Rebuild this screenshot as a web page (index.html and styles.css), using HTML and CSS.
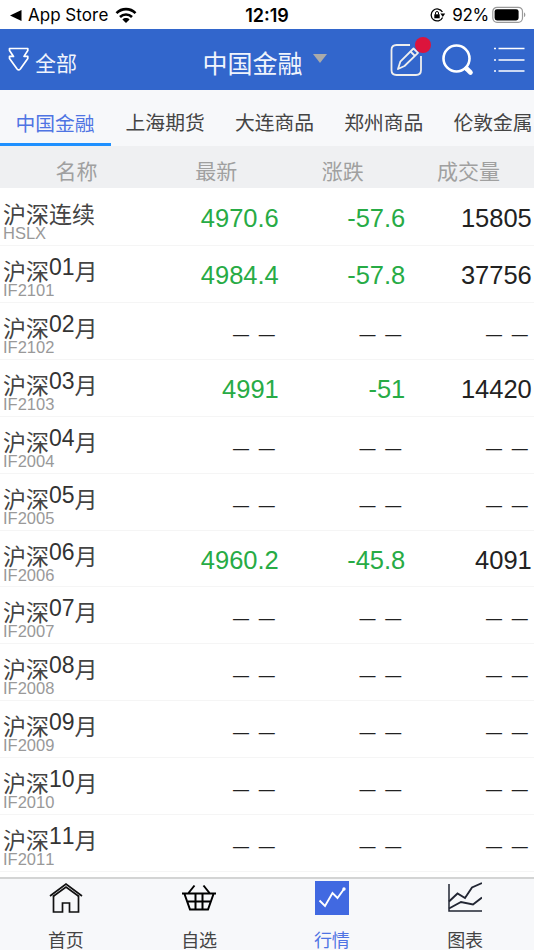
FILE: index.html
```
<!DOCTYPE html>
<html lang="zh-CN">
<head>
    <meta charset="UTF-8">
    <meta name="viewport" content="width=device-width, initial-scale=1.0">
    <title>行情</title>
    <link rel="stylesheet" href="styles.css">
</head>
<body>
    <div class="status-bar">
        <div class="status-left">
            <svg class="back" width="12" height="11" viewBox="0 0 12 11"><path d="M11.5 0v11L0 5.5z"/></svg>
            <span>App Store</span>
            <svg class="wifi" width="22" height="17" viewBox="0 0 22 17">
                <g fill="none" stroke="#000" stroke-width="2.6">
                    <path d="M1.5 6.2C6.8.8 15.2.8 20.5 6.2"/>
                    <path d="M5 10c3.4-3.4 8.6-3.4 12 0"/>
                </g>
                <path d="M7.4 12.4c2-1.9 5.2-1.9 7.2 0L11 16z"/>
            </svg>
        </div>
        <div class="status-time">12:19</div>
        <div class="status-right">
            <svg class="lock" width="16" height="14" viewBox="0 0 16 14">
                <path d="M12.4 4A6 6 0 1 0 12.6 9.5" fill="none" stroke="#000" stroke-width="1.3"/>
                <path d="M10.4 5.5h4.8L12.8 8.9z"/>
                <path d="M4.3 6.3h5.4v4H4.3z"/>
                <path d="M5.5 6.6V5a1.5 1.5 0 0 1 3 0v1.6" fill="none" stroke="#000"/>
            </svg>
            <span>92%</span>
            <svg class="battery" width="34" height="18" viewBox="0 0 34 18">
                <rect x=".8" y="1.3" width="29.7" height="15" rx="4.2" fill="none" stroke="#999" stroke-width="1.2"/>
                <rect x="2.6" y="3.2" width="24" height="11.2" rx="2.4"/>
                <path d="M32 6.5c1.8.6 1.8 4 0 4.6z" fill="#999"/>
            </svg>
        </div>
    </div>

    <div class="header">
        <div class="all">
            <svg width="22" height="25" viewBox="0 0 22 25">
                <path d="M1.5 1.5h18.3v2L16 9.4h3.8v2.2L12.3 22q-1.6 1.8-3.2 0L1.5 11.6V9.4h4L1.5 3.5z" fill="none" stroke="#fff" stroke-width="1.7" stroke-linejoin="round"/>
            </svg>
            <span>全部</span>
        </div>
        <div class="title">中国金融<i class="caret"></i></div>
        <div class="actions">
            <div class="edit">
                <svg width="34" height="34" viewBox="0 0 34 34" fill="none" stroke="#eee" stroke-width="1.8">
                    <path d="M20 2H6.5Q1.5 2 1.5 7V27Q1.5 32 6.5 32H26Q31 32 31 27V13"/>
                    <path d="M8 26l2.3-7.3L23.5 5.5l4.5 4.3L14.5 23z" stroke-linejoin="round"/>
                    <path d="M20.5 8.5l4.5 4.500"/>
                </svg>
                <span class="badge"></span>
            </div>
            <svg class="search" width="32" height="32" viewBox="0 0 32 32" fill="none" stroke="#fff">
                <circle cx="14.5" cy="14.5" r="13" stroke-width="2.6"/>
                <path d="M24.5 24.5l4 4" stroke-width="4.6" stroke-linecap="round"/>
            </svg>
            <svg class="menu" width="31" height="28" viewBox="0 0 31 28" stroke="#fff" stroke-width="1.7">
                <path d="M0 2.500h2M4.500 2.500H30.500M0 14h2M4.500 14H30.500M0 25h2M4.500 25H30.500"/>
            </svg>
        </div>
    </div>

    <div class="tabs">
        <div class="tab active">中国金融</div>
        <div class="tab">上海期货</div>
        <div class="tab">大连商品</div>
        <div class="tab">郑州商品</div>
        <div class="tab">伦敦金属</div>
    </div>

    <div class="columns">
        <span>名称</span>
        <span>最新</span>
        <span>涨跌</span>
        <span>成交量</span>
    </div>

    <div class="quotes" id="quotes">
        <!-- Rows are added by the script -->
    </div>

    <div class="nav">
        <div class="nav-item">
            <svg width="34" height="34" viewBox="0 0 34 34" fill="none" stroke="#111" stroke-width="1.7">
                <path d="M1 15L17 3l16 12"/>
                <path d="M4 15.5L17 6l13 9.5"/>
                <path d="M4.5 14.5V31H13.5V22H20.5V31H29.5V14.5"/>
            </svg>
            <span>首页</span>
        </div>
        <div class="nav-item">
            <svg width="34" height="34" viewBox="0 0 34 34" fill="none" stroke="#000" stroke-width="2">
                <path d="M0 12.5H34M2.5 13L8 28.5H26L31.5 13M6 20.5H28M13.5 13V28M20.5 13V28M6.5 12L12.5 4.5M27.5 12L21.5 4.5"/>
            </svg>
            <span>自选</span>
        </div>
        <div class="nav-item active">
            <svg width="34" height="34" viewBox="0 0 34 34">
                <rect width="34" height="34" fill="#4169e1"/>
                <path d="M4.5 19.5L10 25 17.5 12 22.5 17 29 8" fill="none" stroke="#fff" stroke-width="1.9"/>
                <circle cx="29" cy="8" r="1.7" fill="#fff"/>
            </svg>
            <span>行情</span>
        </div>
        <div class="nav-item">
            <svg width="34" height="34" viewBox="0 0 34 34" fill="none" stroke="#222633" stroke-width="1.9">
                <path d="M1 3V30H34" stroke-width="1.5"/>
                <path d="M1 20.5L9.5 12.5 17 17 24 6.5 34 2"/>
                <path d="M1 27.5L13 21 25 23.5 34 16.5"/>
            </svg>
            <span>图表</span>
        </div>
    </div>

    <script>
        const quotes = [
            { month: '', code: 'HSLX', last: '4970.6', change: '-57.6', volume: '15805' },
            { month: '01', code: 'IF2101', last: '4984.4', change: '-57.8', volume: '37756' },
            { month: '02', code: 'IF2102' },
            { month: '03', code: 'IF2103', last: '4991', change: '-51', volume: '14420' },
            { month: '04', code: 'IF2004' },
            { month: '05', code: 'IF2005' },
            { month: '06', code: 'IF2006', last: '4960.2', change: '-45.8', volume: '4091' },
            { month: '07', code: 'IF2007' },
            { month: '08', code: 'IF2008' },
            { month: '09', code: 'IF2009' },
            { month: '10', code: 'IF2010' },
            { month: '11', code: 'IF2011' }
        ];

        // Contracts without a trade show dashes
        function cell(value, color) {
            return value
                ? `<div class="value ${color}">${value}</div>`
                : '<div class="value empty">— —</div>';
        }

        document.getElementById('quotes').innerHTML = quotes.map(q => `
            <div class="row">
                <div class="name">
                    <h3>${q.month ? `沪深<b>${q.month}</b>月` : '沪深连续'}</h3>
                    <p>${q.code}</p>
                </div>
                ${cell(q.last, 'down')}
                ${cell(q.change, 'down')}
                ${cell(q.volume, '')}
            </div>
        `).join('');
    </script>
</body>
</html>
```
FILE: styles.css
```
* {
    box-sizing: border-box;
}

body {
    font-family: 'Liberation Sans', 'Noto Sans CJK SC', sans-serif;
    font-kerning: none;
    margin: 0;
    height: 950px;
    overflow: hidden;
    background: #fff;
    color: #444;
    display: flex;
    flex-direction: column;
}

svg {
    display: block;
    flex: none;
}

.status-bar {
    height: 29px;
    flex: none;
    display: grid;
    grid-template-columns: 1fr auto 1fr;
    align-items: center;
    padding: 1px 9px 0 10px;
    font-family: Inter, sans-serif;
    font-size: 17px;
    color: #000;
}

.status-left,
.status-right {
    display: flex;
    align-items: center;
}

.status-left span {
    margin: 0 7px 0 6px;
}

.status-right {
    justify-content: flex-end;
}

.status-right span {
    margin: 0 3px 0 6px;
    letter-spacing: -0.3px;
}

.battery {
    margin-right: -1px;
}

.status-time {
    margin-left: -1px;
    font-size: 18px;
    font-weight: 600;
}

.header {
    height: 61px;
    flex: none;
    display: grid;
    grid-template-columns: 1fr auto 1fr;
    align-items: center;
    padding: 0 9px 0 8px;
    background: #3266cc;
    color: #f0f4fc;
    font-family: 'Noto Sans CJK SC', sans-serif;
}

.all {
    display: flex;
    gap: 5px;
    font-size: 21px;
    line-height: 30px;
}

.all svg {
    margin-top: 4px;
}

.all span {
    padding-top: 4px;
}

.title {
    display: flex;
    align-items: center;
    margin-left: -4px;
    font-size: 25px;
    padding-top: 5px;
}

.caret {
    border: 7.5px solid transparent;
    border-top: 9px solid #aaa;
    border-bottom: 0;
    margin: -8px 0 0 10px;
}

.actions {
    display: flex;
    justify-content: flex-end;
    align-items: center;
}

.edit {
    position: relative;
    margin-right: 18px;
}

.badge {
    position: absolute;
    top: -6px;
    right: -7px;
    width: 16px;
    height: 16px;
    border-radius: 50%;
    background: #dc143c;
}

.search {
    margin-right: 20px;
}

.tabs {
    height: 56px;
    flex: none;
    display: flex;
    background: #f7f8fa;
    font-family: 'Noto Sans CJK SC', sans-serif;
    font-size: 19.8px;
}

.tab {
    flex: none;
    width: 109.3px;
    padding: 4px 1px 0 0;
    line-height: 56px;
    text-align: center;
    white-space: nowrap;
}

.tab.active {
    width: 111px;
    line-height: 57px;
    color: #4f74e3;
    border-bottom: 3px solid #1e90ff;
}

.columns {
    height: 41.5px;
    flex: none;
    display: grid;
    grid-template-columns: 153px 126.5px 126.5px 1fr;
    background: #eff0f2;
    color: #a0a0a0;
    font-family: 'Noto Sans CJK SC', sans-serif;
    font-size: 21px;
    line-height: 49px;
    text-align: center;
}

.columns span:last-child {
    padding-right: 3px;
}

.quotes {
    flex: 1;
    min-height: 0;
    padding-top: 1.4px;
}

.row {
    height: 56.95px;
    display: grid;
    grid-template-columns: 152.3px 126.5px 126.5px 126.5px;
    border-bottom: 1px solid #f5f5f5;
}

.name {
    padding: 8px 0 0 3px;
}

.name h3 {
    margin: 0;
    font-family: 'Noto Sans CJK SC', sans-serif;
    font-size: 23px;
    font-weight: normal;
    line-height: 32px;
    height: 28px;
}

.name b {
    display: inline-block;
    font-family: 'Liberation Sans', sans-serif;
    font-size: 23px;
    font-weight: normal;
    line-height: 20px;
    vertical-align: 5px;
    color: #333;
}

.name p {
    margin: 0;
    font-size: 16.5px;
    line-height: 17px;
    color: #999;
}

.value {
    padding-top: 1px;
    font-size: 25.5px;
    line-height: 57px;
    text-align: right;
    color: #222;
}

.value.down {
    color: #27ab45;
}

.value.empty {
    padding: 3px 4px 0 0;
    font-size: 16px;
    word-spacing: 5.3px;
}

.nav {
    height: 73px;
    flex: none;
    display: grid;
    grid-template-columns: repeat(4, 1fr);
    padding-right: 3px;
    background: #f7f8fa;
    border-top: 2px solid #d3d4d4;
}

.nav-item {
    display: flex;
    flex-direction: column;
    align-items: center;
    padding-top: 2px;
    font-family: 'Noto Sans CJK SC', sans-serif;
    font-size: 18px;
}

.nav-item:first-child {
    padding-right: 1px;
}

.nav-item:last-child {
    padding-left: 1px;
}

.nav-item span {
    margin-top: 14px;
    line-height: 20px;
}

.nav-item.active {
    color: #4f74e3;
}
```
